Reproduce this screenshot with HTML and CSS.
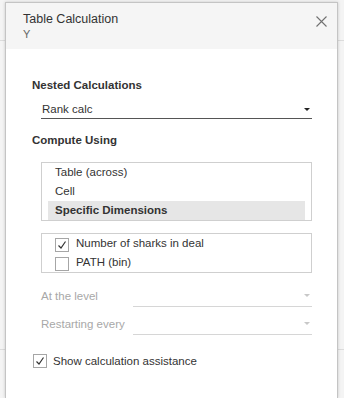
FILE: index.html
```html
<!DOCTYPE html>
<html lang="en">
<head>
    <meta charset="UTF-8">
    <meta name="viewport" content="width=device-width, initial-scale=1.0">
    <title>Table Calculation</title>
    <link rel="stylesheet" href="styles.css">
</head>
<body>
    <div class="dialog">
        <div class="header">
            <div class="headerText">
                <div class="title">Table Calculation</div>
                <div class="subtitle">Y</div>
            </div>
            <svg class="close" width="11" height="11" viewBox="0 0 11 11">
                <path d="M0.5 0.5 L10.5 10.5 M10.5 0.5 L0.5 10.5" stroke="#707070" stroke-width="1.1" fill="none"/>
            </svg>
        </div>

        <div class="content">
            <div class="sectionTitle">Nested Calculations</div>
            <div class="dropdown">
                <span>Rank calc</span>
                <span class="arrow"></span>
            </div>

            <div class="sectionTitle compute">Compute Using</div>
            <div class="listbox">
                <div class="listItem">Table (across)</div>
                <div class="listItem">Cell</div>
                <div class="listItem selected">Specific Dimensions</div>
            </div>

            <div class="checklist">
                <div class="checkRow">
                    <span class="checkbox checked">
                        <svg width="12" height="12" viewBox="0 0 12 12"><polyline points="2.5,6.5 5,9 9.5,2.5" stroke="#333" stroke-width="1.2" fill="none"/></svg>
                    </span>
                    <span>Number of sharks in deal</span>
                </div>
                <div class="checkRow">
                    <span class="checkbox"></span>
                    <span>PATH (bin)</span>
                </div>
            </div>

            <div class="levelRow">
                <span class="levelLabel">At the level</span>
                <div class="dropdown disabled">
                    <span></span>
                    <span class="arrow"></span>
                </div>
            </div>
            <div class="levelRow second">
                <span class="levelLabel">Restarting every</span>
                <div class="dropdown disabled">
                    <span></span>
                    <span class="arrow"></span>
                </div>
            </div>

            <div class="assist">
                <span class="checkbox checked">
                    <svg width="12" height="12" viewBox="0 0 12 12"><polyline points="2.5,6.5 5,9 9.5,2.5" stroke="#333" stroke-width="1.2" fill="none"/></svg>
                </span>
                <span>Show calculation assistance</span>
            </div>
        </div>
    </div>
</body>
</html>
```

FILE: styles.css
```css
* {
    font-family: "Liberation Sans", Arial, sans-serif;
    box-sizing: border-box;
}
body {
    margin: 0;
    height: 398px;
    overflow: hidden;
    color: #333;
    background-color: #f4f4f4;
    background-image:
        linear-gradient(#dcdcdc, #dcdcdc),
        linear-gradient(#dcdcdc, #dcdcdc);
    background-size: 100% 1px, 100% 1px;
    background-position: 0 40px, 0 349px;
    background-repeat: no-repeat;
}
.dialog {
    margin: 2px 0 0 5px;
    width: 333px;
    height: 396px;
    background: #fff;
    border: 1px solid #c4c4c4;
    border-bottom: none;
    box-shadow: 0 0 3px rgba(0, 0, 0, 0.18);
}
.header {
    display: flex;
    justify-content: space-between;
    align-items: flex-start;
    height: 46px;
    padding: 9px 10px 0 17px;
    background: #f5f5f5;
}
.title {
    font-size: 12.5px;
    line-height: 15px;
    color: #333;
}
.subtitle {
    font-size: 11px;
    line-height: 14px;
    color: #666;
}
.close {
    margin-top: 4px;
}
.content {
    padding: 28px 0 0 26px;
    font-size: 11.5px;
}
.sectionTitle {
    font-weight: bold;
    line-height: 16px;
    color: #333;
}
.sectionTitle.compute {
    margin-top: 13px;
}
.dropdown {
    display: flex;
    justify-content: space-between;
    align-items: center;
    width: 271px;
    min-height: 18px;
    margin: 8px 0 0 9px;
    padding: 0 1px 1px 1px;
    line-height: 16px;
    border-bottom: 1px solid #555;
}
.arrow {
    width: 0;
    height: 0;
    margin-right: 1px;
    border-left: 3px solid transparent;
    border-right: 3px solid transparent;
    border-top: 3px solid #222;
}
.listbox {
    width: 271px;
    margin: 14px 0 0 9px;
    padding: 0 6px;
    border: 1px solid #cfcfcf;
}
.listItem {
    line-height: 19px;
    padding-left: 7px;
}
.listItem.selected {
    background: #e6e6e6;
    font-weight: bold;
}
.checklist {
    width: 271px;
    margin: 12px 0 0 9px;
    padding-left: 13px;
    border: 1px solid #cfcfcf;
}
.checkRow {
    display: flex;
    align-items: flex-start;
    line-height: 19px;
}
.checkbox {
    display: flex;
    align-items: center;
    justify-content: center;
    flex: none;
    width: 14px;
    height: 14px;
    border: 1px solid #a6a6a6;
    background: #fff;
}
.checkRow .checkbox {
    margin: 4px 7px 0 0;
}
.levelRow {
    display: flex;
    align-items: flex-end;
    margin: 14px 0 0 9px;
    color: #a8a8a8;
}
.levelRow.second {
    margin-top: 8px;
}
.levelLabel {
    width: 92px;
    line-height: 16px;
    padding-bottom: 3px;
}
.dropdown.disabled {
    width: 179px;
    min-height: 20px;
    margin: 0;
    padding-bottom: 3px;
    border-bottom: 1px solid #d6d6d6;
}
.dropdown.disabled .arrow {
    border-top-color: #c8c8c8;
}
.assist {
    display: flex;
    align-items: center;
    margin: 18px 0 0 1px;
    line-height: 16px;
}
.assist .checkbox {
    margin-right: 6px;
}
```
